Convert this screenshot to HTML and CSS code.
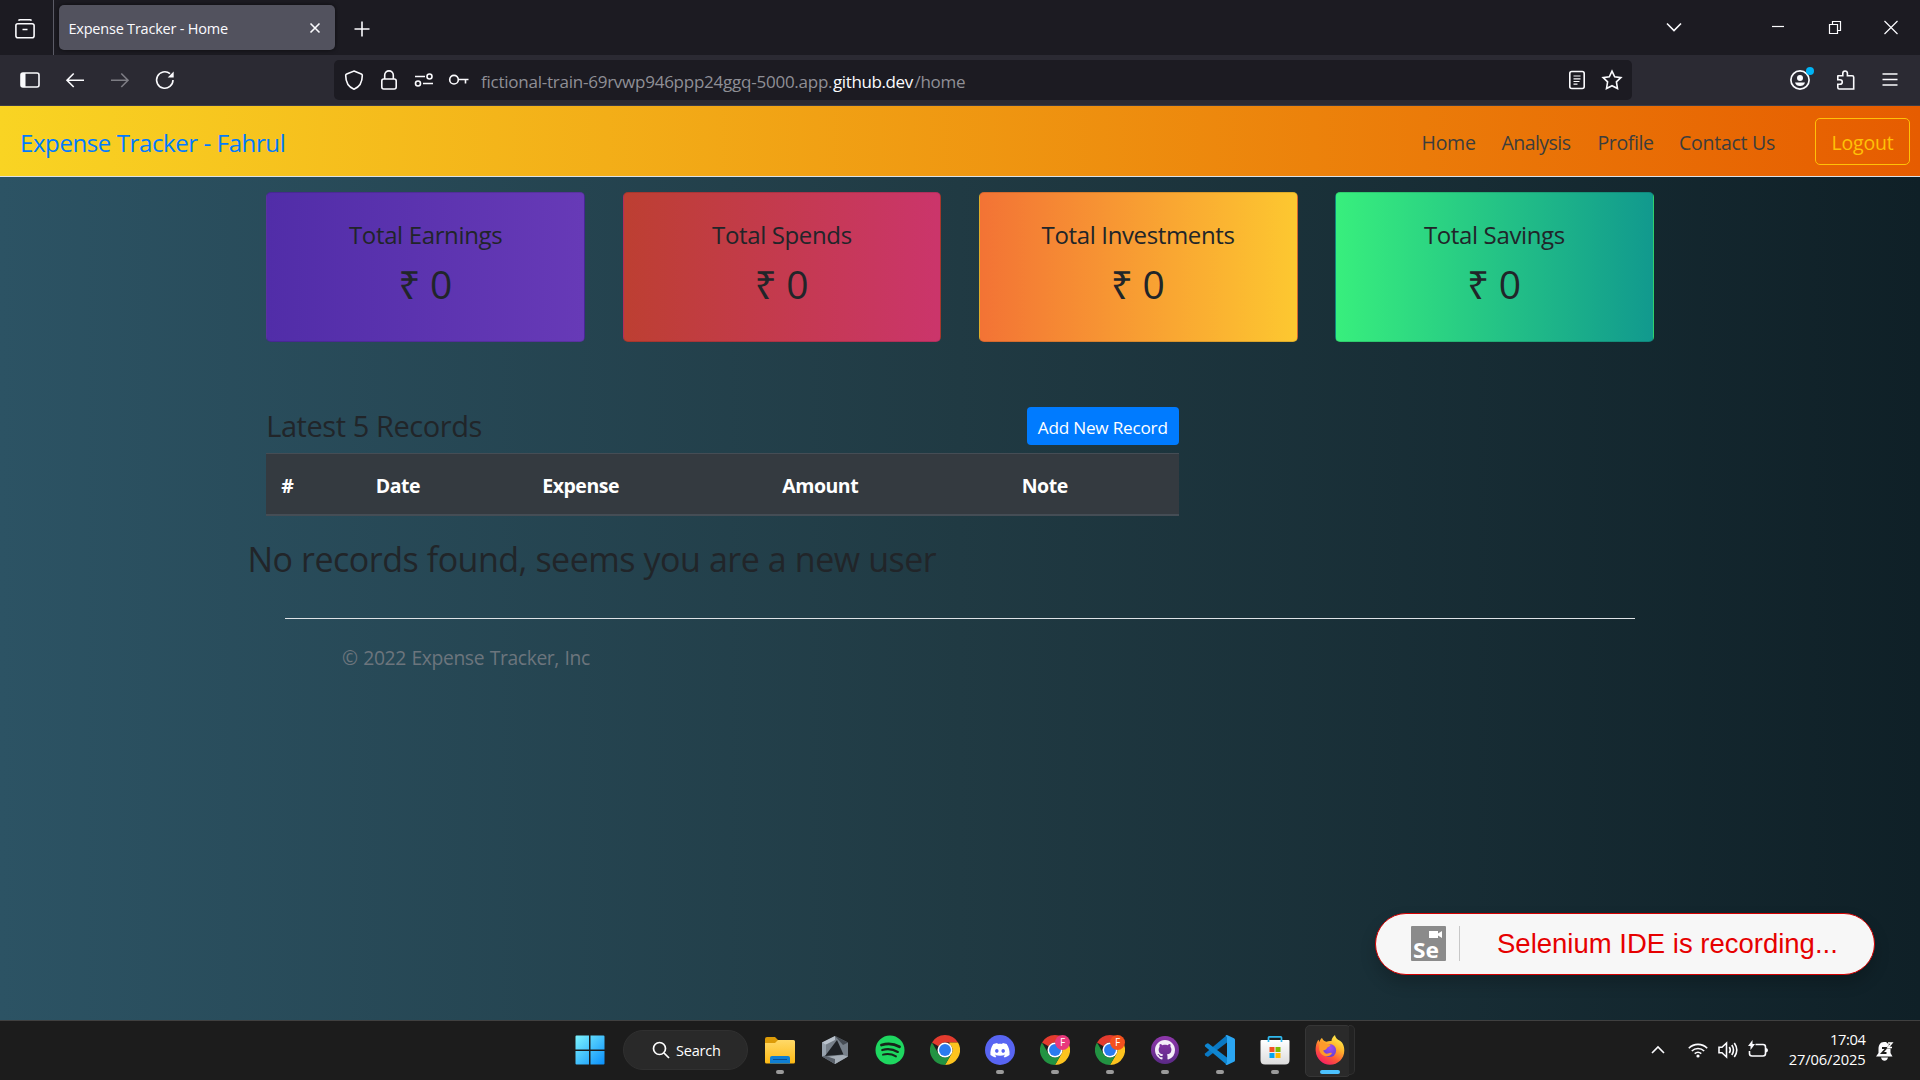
FILE: index.html
```html
<!DOCTYPE html>
<html lang="en">
<head>
<meta charset="utf-8">
<title>Expense Tracker - Home</title>
<link rel="stylesheet" href="styles.css">
</head>
<body>
<svg class="defs" width="0" height="0">
  <defs>
    <linearGradient id="winGrad" x1="0" y1="0" x2="1" y2="1"><stop offset="0" stop-color="#7df3fd"/><stop offset="1" stop-color="#0a8ffb"/></linearGradient>
    <linearGradient id="folderGrad" x1="0" y1="0" x2="0" y2="1"><stop offset="0" stop-color="#ffd968"/><stop offset="1" stop-color="#fdb914"/></linearGradient>
    <linearGradient id="ghGrad" x1="0" y1="0" x2="0" y2="1"><stop offset="0" stop-color="#8f37ab"/><stop offset="1" stop-color="#5a2a86"/></linearGradient>
    <linearGradient id="bagGrad" x1="0" y1="0" x2="0" y2="1"><stop offset="0" stop-color="#ffffff"/><stop offset="1" stop-color="#dcdcdc"/></linearGradient>
    <linearGradient id="foxGrad" x1=".8" y1="0" x2=".2" y2="1"><stop offset="0" stop-color="#fff44f"/><stop offset=".35" stop-color="#ffb32c"/><stop offset=".65" stop-color="#ff5a36"/><stop offset="1" stop-color="#f5156c"/></linearGradient>
    <radialGradient id="foxCore" cx=".55" cy=".3" r=".8"><stop offset="0" stop-color="#a24bf0"/><stop offset="1" stop-color="#5a3fd0"/></radialGradient>
    <symbol id="chrome" viewBox="0 0 48 48">
      <path fill="#e33b2e" d="M24 0A24 24 0 0 1 44.8 12H24A12 12 0 0 0 13.6 18L3.2 12A24 24 0 0 1 24 0z"/>
      <path fill="#fcc31e" d="M44.8 12A24 24 0 0 1 24 48L34.4 30A12 12 0 0 0 34.4 18L31 14.300V12z"/>
      <path fill="#229342" d="M24 48A24 24 0 0 1 3.200 12L13.600 30A12 12 0 0 0 34.400 30z"/>
      <circle cx="24" cy="24" r="12" fill="#fff"/><circle cx="24" cy="24" r="9.500" fill="#2a7bf0"/>
    </symbol>
  </defs>
</svg>

<header class="browser">
  <div class="tabbar">
    <div class="view-cell">
      <svg class="ico" viewBox="0 0 20 20"><path d="M3.500 1.700q.5-1 1.500-1h10q1 0 1.500 1M2.700 4.800h14.600a1.800 1.800 0 0 1 1.800 1.800v10.200a2 2 0 0 1-2 2H2.900a2 2 0 0 1-2-2V6.600a1.800 1.800 0 0 1 1.800-1.800zM7.500 10.500h5"/></svg>
    </div>
    <div class="tab">
      <span class="tab-title">Expense Tracker - Home</span>
      <svg class="tab-close" viewBox="0 0 12 12"><path d="M1.500 1.500l9 9M10.500 1.500l-9 9"/></svg>
    </div>
    <svg class="new-tab" viewBox="0 0 16 16"><path d="M8 .5v15M.5 8h15"/></svg>
    <div class="window-controls">
      <svg class="wc" viewBox="0 0 20 20"><path stroke-width="1.600" d="M3 6.500l7 7 7-7"/></svg>
      <svg class="wc wc-min" viewBox="0 0 20 20"><path d="M4 9.500h12"/></svg>
      <svg class="wc wc-max" viewBox="0 0 20 20"><path d="M4.500 7.500h8v9h-8zM7.500 7.500v-3h8v9h-3"/></svg>
      <svg class="wc wc-close" viewBox="0 0 20 20"><path d="M3.500 4l13 13M16.500 4l-13 13"/></svg>
    </div>
  </div>
  <div class="toolbar">
    <div class="nav-buttons">
      <svg class="ico" viewBox="0 0 20 20"><rect x="1" y="3" width="18" height="14" rx="2"/><path class="solid" d="M1 3h4.500v14H1z"/></svg>
      <svg class="ico" viewBox="0 0 20 20"><path d="M19 10.300H2M8.700 3.500L2 10.300l6.700 6.700"/></svg>
      <svg class="ico dim" viewBox="0 0 20 20"><path d="M1 10.300h17M11.300 3.500l6.700 6.800-6.700 6.700"/></svg>
      <svg class="ico" viewBox="0 0 20 20"><path d="M18 10a8.200 8.200 0 1 1-3-6.300"/><path class="solid" d="M18.700 1.500v6h-6z"/></svg>
    </div>
    <div class="urlbar">
      <svg class="ico" viewBox="0 0 20 20"><path d="M10 1l7.300 3q1 .4 1 1.500C18.300 12 15.500 17 10 19.200 4.500 17 1.700 12 1.700 5.500q0-1.100 1-1.500z"/></svg>
      <svg class="ico" viewBox="0 0 20 20"><rect x="2.800" y="9" width="14.400" height="10" rx="2"/><path d="M5.700 9V5.200a4.300 4.300 0 0 1 8.600 0V9"/></svg>
      <svg class="ico" viewBox="0 0 20 20"><path d="M1 6.500h10M9 13.500h10"/><circle cx="15.500" cy="6.500" r="2.500"/><circle cx="4" cy="13.500" r="2.500"/></svg>
      <svg class="ico" viewBox="0 0 20 20"><circle cx="5" cy="9.700" r="4.300"/><path d="M9.300 9.500h10.200M16.500 9.500v4"/></svg>
      <div class="url"><span class="url-sub">fictional-train-69rvwp946ppp24ggq-5000.app.</span><span class="url-host">github.dev</span><span class="url-path">/home</span></div>
      <svg class="ico" viewBox="0 0 20 20"><rect x="2.800" y="1.500" width="14.400" height="17" rx="2"/><path d="M6.500 6h7M6.500 8.800h7M6.500 11.500h6M6.500 14.200h4" stroke-width="1.200"/></svg>
      <svg class="ico" viewBox="0 0 20 20"><path d="M10 1.200l2.700 5.600 6.200.8-4.500 4.300 1.100 6.600L10 15.700l-5.500 2.800 1.100-6.600L1.100 7.600l6.200-.8z"/></svg>
    </div>
    <div class="tool-buttons">
      <div class="account">
        <svg class="ico" viewBox="0 0 20 20"><circle cx="10" cy="10" r="9.100" stroke-width="1.700"/><circle class="solid" cx="10" cy="8" r="3"/><path class="solid" d="M5 12.500h10c-1 4.800-9 4.800-10 0z"/></svg>
        <span class="dot"></span>
      </div>
      <svg class="ico puzzle" viewBox="0 0 20 20"><path d="M2 5.800h4.800V3.300a2.300 2.300 0 0 1 4.600 0v2.500h4.800a1.500 1.500 0 0 1 1.500 1.500V19H3.300A1.500 1.500 0 0 1 1.800 17.500v-3.200H4a2.300 2.300 0 0 0 0-4.600H1.800V6z"/></svg>
      <svg class="ico" viewBox="0 0 20 20"><path d="M2.500 4h15M2.500 9.500h15M2.500 15h15"/></svg>
    </div>
  </div>
</header>

<main class="page">
  <nav class="navbar">
    <a class="brand">Expense Tracker - Fahrul</a>
    <div class="nav-links"><a class="l-home">Home</a><a class="l-analysis">Analysis</a><a class="l-profile">Profile</a><a class="l-contact">Contact Us</a></div>
    <a class="logout">Logout</a>
  </nav>
  <div class="container">
    <section class="cards">
      <div class="card earnings"><h5>Total Earnings</h5><h2>₹ 0</h2></div>
      <div class="card spends"><h5>Total Spends</h5><h2>₹ 0</h2></div>
      <div class="card investments"><h5>Total Investments</h5><h2>₹ 0</h2></div>
      <div class="card savings"><h5>Total Savings</h5><h2>₹ 0</h2></div>
    </section>
    <section class="records">
      <div class="records-head"><h4>Latest 5 Records</h4><a class="add">Add New Record</a></div>
      <div class="thead"><span class="th">#</span><span class="th">Date</span><span class="th">Expense</span><span class="th">Amount</span><span class="th">Note</span></div>
    </section>
    <h3 class="empty">No records found, seems you are a new user</h3>
    <footer class="footer"><p>© 2022 Expense Tracker, Inc</p></footer>
  </div>
  <div class="recorder">
    <svg class="se" viewBox="0 0 35 35"><rect width="35" height="35" rx="1" fill="#8b8b8b"/><path fill="#fff" d="M18 5h9v2.500l4-2.500v7l-4-2.500V12h-9z"/><text x="2" y="31.500" textLength="26" lengthAdjust="spacingAndGlyphs">Se</text></svg>
    <span class="rec-line"></span>
    <span class="rec-text">Selenium IDE is recording...</span>
  </div>
</main>

<footer class="taskbar">
  <span class="side"></span>
  <div class="apps">
    <div class="app start"><svg viewBox="0 0 30 30"><path fill="url(#winGrad)" d="M.5 1.500q0-1 1-1H14v14H.5zM15.500.5H28.500q1 0 1 1v13h-14zM.5 16H14v13.500H1.500q-1 0-1-1zM15.500 16h14v12.500q0 1-1 1h-13z"/></svg></div>
    <div class="search">
      <svg viewBox="0 0 18 18"><circle cx="7.500" cy="7.500" r="6"/><path d="M12 12l5 5"/></svg><span>Search</span>
    </div>
    <div class="app run"><svg viewBox="0 0 30 30"><path fill="#dc9b08" d="M0 4q0-2 2-2h8l3 3v6H0z"/><path fill="url(#folderGrad)" d="M0 8h10l3-3h15.500q1.500 0 1.500 1.500V27q0 1.500-1.500 1.500h-27Q0 28.500 0 27z"/><path fill="#0f7fd3" d="M5 28.500V23q0-2 2-2h16q2 0 2 2v5.500z"/><path stroke="#0a4f93" d="M8 24.500h14"/></svg></div>
    <div class="app"><svg viewBox="0 0 30 30"><path fill="#77808a" d="M15 1l13 6.500v14L15 29 2 21.500v-14z"/><path fill="#b9c2cc" d="M15 1L2 7.500 5 10 15 5z"/><path fill="#98a3ae" d="M2 7.500L6 10v10l-4 1.500z"/><path fill="#454b53" d="M15 1l13 6.500-5 2.500z"/><path fill="#a6afb8" d="M15 29l-9-7 17-2 5 1.500z"/><path fill="#1f2226" d="M17 5l6.500 14.500L5 21z"/><path fill="#596069" d="M15 29L2 21.500 6 21l9 3z"/></svg></div>
    <div class="app"><svg viewBox="0 0 30 30"><circle cx="15" cy="15" r="14.500" fill="#1ed760"/><path fill="none" stroke="#17251b" stroke-linecap="round" stroke-width="2.800" d="M6.500 10c6-1.700 13-1 18 1.800"/><path fill="none" stroke="#17251b" stroke-linecap="round" stroke-width="2.300" d="M7.300 15c5-1.400 11-.7 15.500 1.900"/><path fill="none" stroke="#17251b" stroke-linecap="round" stroke-width="1.900" d="M8 19.700c4.500-1.200 9-.6 13 1.700"/></svg></div>
    <div class="app"><svg viewBox="0 0 30 30"><use href="#chrome"/></svg></div>
    <div class="app run"><svg viewBox="0 0 30 30"><circle cx="15" cy="15" r="15" fill="#5865f2"/><g transform="translate(5.400 5.600) scale(.8)"><path fill="#fff" d="M20.317 4.370a19.791 19.791 0 00-4.885-1.515.074.074 0 00-.079.037c-.211.375-.445.865-.608 1.250-1.845-.276-3.680-.276-5.487 0-.164-.393-.406-.874-.618-1.250a.077.077 0 00-.079-.037 19.736 19.736 0 00-4.885 1.515.070.070 0 00-.032.028C.533 9.046-.319 13.580.099 18.058a.082.082 0 00.031.056c2.053 1.508 4.041 2.423 5.993 3.029a.078.078 0 00.084-.028c.462-.630.873-1.295 1.226-1.994a.076.076 0 00-.042-.106c-.653-.248-1.274-.550-1.872-.892a.077.077 0 01-.008-.128c.126-.094.252-.192.372-.291a.074.074 0 01.078-.011c3.928 1.793 8.180 1.793 12.061 0a.074.074 0 01.079.010c.120.099.246.198.373.292a.077.077 0 01-.007.128 12.299 12.299 0 01-1.873.891.077.077 0 00-.041.107c.360.698.772 1.363 1.225 1.993a.076.076 0 00.084.029c1.961-.607 3.950-1.522 6.002-3.029a.077.077 0 00.031-.055c.500-5.177-.838-9.674-3.549-13.660a.061.061 0 00-.031-.029zM8.020 15.331c-1.183 0-2.157-1.086-2.157-2.419 0-1.333.956-2.419 2.157-2.419 1.211 0 2.176 1.095 2.157 2.419 0 1.333-.956 2.419-2.157 2.419zm7.975 0c-1.183 0-2.157-1.086-2.157-2.419 0-1.333.955-2.419 2.157-2.419 1.211 0 2.176 1.095 2.157 2.419 0 1.333-.946 2.419-2.157 2.419z"/></g></svg></div>
    <div class="app run"><svg viewBox="0 0 30 30"><use href="#chrome"/><circle cx="22.500" cy="7.500" r="7.500" fill="#e8397c"/><text class="badge-f" x="20" y="11.200">F</text></svg></div>
    <div class="app run"><svg viewBox="0 0 30 30"><use href="#chrome"/><circle cx="22.500" cy="7.500" r="7.500" fill="#f4511e"/><text class="badge-f" x="20" y="11.200">F</text></svg></div>
    <div class="app run"><svg viewBox="0 0 30 30"><circle cx="15" cy="15" r="14" fill="url(#ghGrad)"/><path fill="#f4eef8" transform="translate(5 5) scale(1.250)" d="M8 0C3.580 0 0 3.580 0 8c0 3.540 2.290 6.530 5.470 7.590.4.070.55-.17.55-.38 0-.19-.01-.82-.01-1.490-2.010.37-2.530-.49-2.690-.94-.09-.23-.48-.94-.82-1.130-.28-.15-.68-.52-.01-.53.63-.01 1.080.58 1.230.82.72 1.210 1.870.87 2.330.66.070-.52.28-.87.51-1.070-1.780-.2-3.640-.89-3.640-3.950 0-.87.31-1.590.82-2.150-.08-.2-.36-1.020.08-2.120 0 0 .67-.21 2.200.82.64-.18 1.320-.27 2-.27s1.360.09 2 .27c1.530-1.040 2.200-.82 2.200-.82.44 1.100.16 1.920.08 2.120.51.56.82 1.270.82 2.150 0 3.070-1.870 3.750-3.650 3.950.29.25.54.73.54 1.480 0 1.070-.01 1.930-.01 2.200 0 .21.15.46.55.38A8.010 8.010 0 0 0 16 8c0-4.420-3.580-8-8-8z"/></svg></div>
    <div class="app run"><svg viewBox="0 0 30 30"><path fill="#0a79c4" d="M22 0L0 18.500q-.5 1 .2 1.700L2 21.500q.8.500 1.500 0L22 7.500z"/><path fill="#0f86d1" d="M22 30L0 11.500q-.5-1 .2-1.700L2 8.500q.8-.5 1.500 0L22 22.500z"/><path fill="#2ba6f2" d="M22 0l7 3.200q1 .5 1 1.500v20.600q0 1-1 1.500L22 30q-1 0-1.500-.7l1.500-1.300V2L20.500.7Q21 0 22 0z"/></svg></div>
    <div class="app run"><svg viewBox="0 0 30 30"><path fill="none" stroke="#2fb9ee" stroke-width="1.700" d="M8.500 7V2.500q0-.7.700-.7h11.600q.7 0 .7.700V7"/><path fill="url(#bagGrad)" d="M.5 6q0-1 1-1h27q1 0 1 1v19q0 4.500-4.500 4.500H5Q.5 29.500.5 25z"/><path fill="none" stroke="#2fb9ee" stroke-width="1.700" d="M8.500 5v2M21.500 5v2"/><path fill="#f25022" d="M9.500 12h5v5h-5z"/><path fill="#7fba00" d="M15.500 12h5v5h-5z"/><path fill="#00a4ef" d="M9.500 18h5v5h-5z"/><path fill="#ffb900" d="M15.500 18h5v5h-5z"/></svg></div>
    <div class="app run active"><span class="stack"></span><svg viewBox="0 0 30 30"><path fill="url(#foxGrad)" d="M28.300 10c-.6-1.600-1.900-3.300-3-3.900-3.400-1.900-5.300-3.900-5.300-6.100-2.500 1.600-3.400 4.400-3.500 6-2.200-.3-3.700.2-5 .7C9.300 6.300 7.700 4.900 7 3c-1.500 1-2.300 2.700-2.500 4.200L3.600 4.800C1.500 6.600.4 12 .7 16c.6 8 6.800 13.700 14.300 13.700 8 0 14.300-6 14.300-14.200 0-2.200-.4-4-1-5.500z"/><circle cx="14.500" cy="15.500" r="6.600" fill="url(#foxCore)"/><path fill="#ff9a2a" d="M4.500 7.200c3-.5 5 .3 6.700 1.800 2 0 4.300.2 4.300 1 0 1.500-3 2-3.500 3-.2 1-1.500 2-3.800 2.500C9 18 11 19 13 18.500c1.500-.5 2.500-1 4-.3-1 2-3.200 3.200-5.500 3-4.500-.3-7-3.700-7.300-7.200z"/></svg></div>
  </div>
  <div class="tray">
    <svg class="up" viewBox="0 0 20 20"><path d="M4 13l6-6 6 6"/></svg>
    <svg class="wifi" viewBox="0 0 20 20"><path d="M.8 8.200a13 13 0 0 1 18.400 0M3.800 11a9 9 0 0 1 12.400 0M6.700 13.700a5 5 0 0 1 6.600 0"/><circle class="solid" cx="10" cy="16" r="1.600"/></svg>
    <svg class="vol" viewBox="0 0 20 20"><path d="M1 7.300h3L8.500 3v14L4 12.700H1zM11.300 7q2 3 0 6M13.800 5q3.400 5 0 10M16.300 3q5 7 0 14"/></svg>
    <svg class="bat" viewBox="0 0 20 20"><path d="M7.500 4.500H15q2.500 0 2.500 2.500v6.500q0 2.500-2.500 2.500H4q-2.500 0-2.500-2.500V11"/><path class="solid" d="M4.500 0L0 6h2.500v4L7 4H4.500zM18 8q2 .3 2 2.200T18 12.500z"/></svg>
    <div class="clock"><span class="time">17:04</span><span class="date">27/06/2025</span></div>
    <svg class="bell" viewBox="0 0 20 22"><path class="solid" d="M9 2C5 2 3.500 5.500 3.500 9v4L1 16.500h16.500L15.500 13V6L11 2zM6 17.500h7q-1 3.300-3.500 3.300T6 17.500z"/><path class="zz-back" d="M7 8h4.500L7 13h4.500M13 3h4l-4 4.500h4"/><path class="zz" d="M13 3h4l-4 4.500h4"/></svg>
  </div>
</footer>
</body>
</html>
```

FILE: styles.css
```css
* { box-sizing: border-box; }
body {
  margin: 0; width: 1920px; height: 1080px; overflow: hidden;
  display: flex; flex-direction: column;
  font-family: "Open Sans", "Noto Sans", sans-serif; color: #212529;
}
h2, h3, h4, h5, p { margin: 0; font-weight: 400; }
.defs { position: absolute; }
svg { display: block; flex: none; overflow: visible; }

/* browser chrome */
.browser svg, .tray svg { fill: none; stroke: #fbfbfe; stroke-width: 1.600; }
.browser .solid, .tray .solid { fill: #fbfbfe; stroke: none; }
.ico { width: 20px; height: 20px; }
.dim { opacity: .4; }
.tabbar { height: 55px; background: #1c1b22; display: flex; }
.view-cell { width: 54px; border-right: 1px solid #5b5b66; padding: 18.500px 0 0 15px; }
.tab {
  width: 276px; height: 45px; margin: 5px 0 0 5px; padding: 0 14px 0 9.500px;
  display: flex; align-items: center; justify-content: space-between;
  background: #52525e; border-radius: 5px; box-shadow: 0 0 4px rgba(0,0,0,.6);
}
.tab-title { font-size: 14.500px; letter-spacing: -.22px; line-height: 20px; padding-top: 2px; color: #fbfbfe; }
.tab-close { width: 12px; height: 12px; }
.new-tab { width: 16px; height: 16px; margin: 20.500px 0 0 18.500px; }
.window-controls { margin-left: auto; display: flex; padding: 17px 19px 0 0; }
.wc { width: 20px; height: 20px; }
.browser .wc { stroke-width: 1.200; }
.wc-min { margin-left: 84px; }
.wc-max { margin-left: 37px; }
.wc-close { margin-left: 36px; }
.toolbar { height: 51px; padding: 5px 20px 0; background: #2b2a33; border-bottom: 1px solid #3d3c46; display: flex; }
.nav-buttons { display: flex; gap: 25px; padding-top: 10px; width: 314px; }
.urlbar { width: 1298px; height: 40px; padding: 0 10px; background: #1c1b22; border-radius: 5px; display: flex; align-items: center; gap: 15px; }
.url { flex: 1; margin-left: -3px; display: flex; font-size: 17px; line-height: 24px; padding-top: 3px; color: #8f8f96; }
.url-sub { width: 352px; letter-spacing: -.24px; }
.url-host { width: 81.500px; letter-spacing: -.4px; color: #fbfbfe; }
.url-path { letter-spacing: -.3px; }
.tool-buttons { margin-left: auto; display: flex; gap: 25px; padding-top: 10px; }
.puzzle { margin-left: 1px; margin-right: -1px; }
.account { position: relative; height: 20px; }
.dot { position: absolute; left: 16px; top: -3px; width: 8px; height: 8px; border-radius: 50%; background: #00b3f4; }

/* page */
.page { position: relative; height: 914px; background: linear-gradient(to right, #2c5364, #203a43, #0f2027); }
.navbar {
  height: 71px; padding: 0 10px 0 20px; display: flex; align-items: center;
  background: linear-gradient(to right, #f9d423, #e65c00); border-bottom: 1px solid #dee2e6;
}
.brand { font-size: 24px; line-height: 32px; padding-top: 3px; letter-spacing: -.4px; color: #007bff; }
.nav-links { margin-left: auto; width: 393.500px; display: grid; grid-template-columns: 80px 96px 81.500px auto; font-size: 19.500px; line-height: 30px; padding-top: 4px; color: #3b3d3d; }
.l-home { letter-spacing: -.25px; }
.l-analysis { letter-spacing: -.55px; }
.l-profile { letter-spacing: -.39px; }
.l-contact { letter-spacing: -.26px; }
.logout { width: 95px; height: 47px; padding-left: 15.500px; border: 1px solid #ffc107; border-radius: 5px; color: #ffc107; font-size: 19.500px; line-height: 48px; letter-spacing: -.2px; }

.container { width: 1425px; margin: 0 auto; padding: 15px 18.750px 0; }
.cards { display: grid; grid-template-columns: repeat(4, 318.750px); gap: 37.500px; }
.card { height: 150px; border: 1px solid rgba(0,0,0,.125); border-radius: 5px; padding-top: 27px; text-align: center; }
.card h5 { font-size: 24px; line-height: 30px; letter-spacing: -.36px; }
.card h2 { font-size: 39px; line-height: 48px; margin-top: 10px; letter-spacing: -.3px; padding-right: 1px; }
.earnings { background-image: linear-gradient(to right, #512da8, #673ab7); }
.spends { background-image: linear-gradient(to right, #bd3f32, #cb356b); }
.investments { background-image: linear-gradient(to right, #f37335, #fdc830); }
.savings { background-image: linear-gradient(to right, #38ef7d, #11998e); }
.records { width: 912.500px; margin-top: 65px; }
.records-head { height: 46px; display: flex; justify-content: space-between; }
.records-head h4 { font-size: 29px; line-height: 37px; letter-spacing: -.44px; }
.add { width: 152px; height: 38px; border-radius: 4px; background: #007bff; color: #fff; font-size: 17.200px; line-height: 41px; letter-spacing: -.23px; text-align: center; }
.thead {
  height: 63px; display: grid; grid-template-columns: 94.500px 166.500px 240px 239.500px auto;
  background: #343a40; border: solid #454d55; border-width: 1px 0 2px;
  color: #fff; font-weight: 700; font-size: 19.500px; line-height: 63px; letter-spacing: -.48px;
}
.th { padding-left: 15px; }
.empty { margin: 22px 0 0 -18.750px; font-size: 34px; line-height: 43px; height: 42px; letter-spacing: -.52px; word-spacing: .3px; }
.footer { margin: 38px 18.750px 0; padding: 23px 0 0 57px; border-top: 1px solid #dee2e6; }
.footer p { font-size: 19.300px; line-height: 31px; letter-spacing: -.38px; word-spacing: 1px; color: #6c757d; }

.recorder {
  position: absolute; left: 1375px; top: 807px; width: 500px; height: 62px; padding-left: 35px;
  display: flex; align-items: center; background: #f7f7f7; border: 1px solid #d50000; border-radius: 31px;
  box-shadow: 0 8px 16px rgba(0,0,0,.2);
}
.se { width: 35px; height: 35px; margin-bottom: 2px; }
.se text { fill: #fff; font: 700 22px "Noto Sans", sans-serif; }
.rec-line { width: 1px; height: 35px; margin: 0 0 2px 13px; background: #c8c8c8; }
.rec-text { margin-left: 37px; font: 27.500px/36px "Liberation Sans", Arial, sans-serif; color: #e60000; white-space: nowrap; }

/* taskbar */
.taskbar { height: 60px; background: #1c1c1c; border-top: 1px solid #404040; display: flex; }
.side { width: 565px; }
.apps { display: flex; }
.app { width: 55px; padding: 14px 0 0 12.500px; position: relative; }
.app svg { width: 30px; height: 30px; position: relative; }
.start { width: 58px; padding-left: 10px; }
.search {
  width: 125px; height: 40px; margin: 9px 4.500px 0 0; padding-left: 28px; display: flex; align-items: center; gap: 6px;
  background: #292929; border: 1px solid #303030; border-radius: 20px; color: #fff; font-size: 14.500px; letter-spacing: -.2px;
}
.search svg { width: 18px; height: 18px; fill: none; stroke: #fff; stroke-width: 1.700; }
.run::after { content: ""; position: absolute; left: 23.500px; top: 49px; width: 8px; height: 4px; border-radius: 2px; background: #9a9a9a; }
.active::before { content: ""; position: absolute; z-index: 0; left: 2.500px; top: 4px; width: 44px; height: 50px; border-radius: 5px; background: #2a2a2a; border: 1px solid #363636; }
.stack { position: absolute; left: 46.500px; top: 4px; width: 6px; height: 50px; border: 1px solid #303030; border-left: 0; border-radius: 0 5px 5px 0; background: #222; }
.active::after { left: 17.500px; width: 20px; background: #4cc2ff; }
.badge-f { fill: #fff; font: 10px "Open Sans", sans-serif; }
.tray { margin-left: auto; display: flex; width: 272px; padding-top: 19px; color: #fff; }
.tray svg { width: 20px; height: 20px; }
.tray .wifi { margin-left: 20px; }
.tray .vol, .tray .bat { margin-left: 10px; }
.clock { width: 97.500px; margin-top: -11px; text-align: right; font-size: 14.700px; line-height: 20px; display: flex; flex-direction: column; }
.time { letter-spacing: -.4px; }
.date { letter-spacing: -.12px; }
.tray .bell { width: 20px; height: 22px; margin-left: 9px; }
.tray .bell .zz { stroke: #fff; stroke-width: 1.400; }
.tray .bell .zz-back { stroke: #1c1c1c; stroke-width: 1.800; }
```
